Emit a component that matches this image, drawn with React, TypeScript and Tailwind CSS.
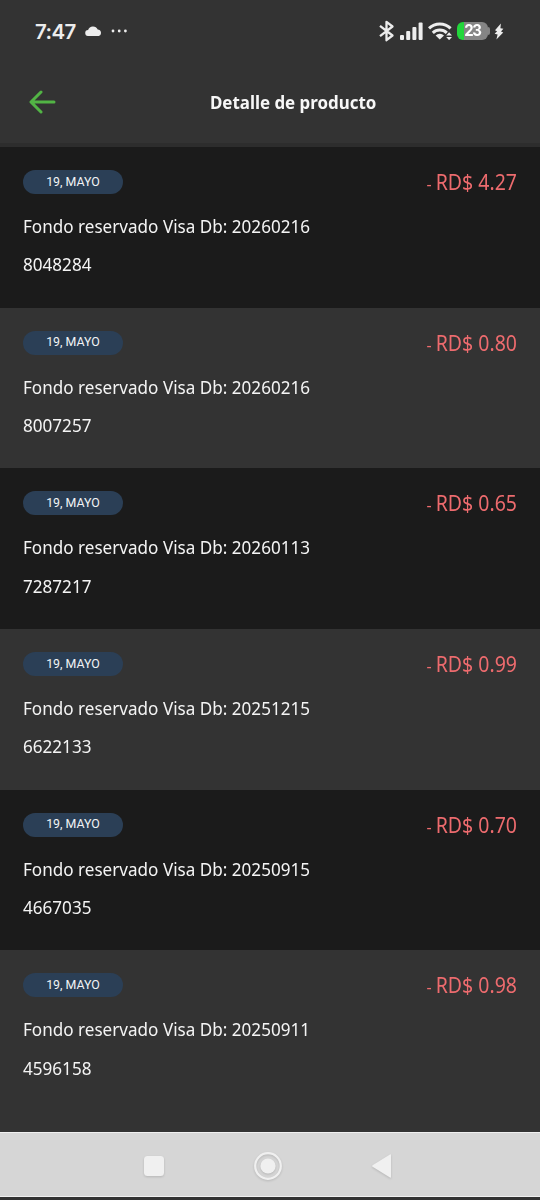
import { clsx } from "clsx";

type Movement = {
  date: string;
  description: string;
  reference: string;
  amount: string;
};

const movements: Movement[] = [
  { date: "19, MAYO", description: "Fondo reservado Visa Db: 20260216", reference: "8048284", amount: "RD$ 4.27" },
  { date: "19, MAYO", description: "Fondo reservado Visa Db: 20260216", reference: "8007257", amount: "RD$ 0.80" },
  { date: "19, MAYO", description: "Fondo reservado Visa Db: 20260113", reference: "7287217", amount: "RD$ 0.65" },
  { date: "19, MAYO", description: "Fondo reservado Visa Db: 20251215", reference: "6622133", amount: "RD$ 0.99" },
  { date: "19, MAYO", description: "Fondo reservado Visa Db: 20250915", reference: "4667035", amount: "RD$ 0.70" },
  { date: "19, MAYO", description: "Fondo reservado Visa Db: 20250911", reference: "4596158", amount: "RD$ 0.98" },
];

function StatusBar() {
  return (
    <div className="flex h-[62px] items-center pl-[35px] pr-[37px] text-[#ededed]">
      <span className="mt-[2px] w-[42px] whitespace-nowrap font-['Inter',sans-serif] text-[20.5px] font-semibold tracking-[-0.6px]">
        7:47
      </span>
      <svg className="ml-2 h-[10px] w-[17px]" viewBox="0 0 17 10" fill="currentColor">
        <path d="M3.3 10a3 3 0 0 1-.2-6A5.2 5.2 0 0 1 12.7 3.6 3.3 3.3 0 0 1 13.8 10Z" />
      </svg>
      <svg className="ml-[9px] h-1 w-[18px]" viewBox="0 0 18 4" fill="currentColor">
        <circle cx="2" cy="2" r="1.4" />
        <circle cx="8.2" cy="2" r="1.4" />
        <circle cx="14.4" cy="2" r="1.4" />
      </svg>

      <div className="ml-auto flex items-center">
        <svg className="h-[22px] w-4" viewBox="0 0 16 22" fill="none" stroke="currentColor" strokeWidth="2.3">
          <path d="M1 5.8 13.5 15.5 7.5 20.2V1.8l6 4.7L1 16.2" strokeLinejoin="round" />
        </svg>
        <svg className="ml-[5px] h-[18px] w-[23px]" viewBox="0 0 23 18" fill="currentColor">
          <rect x="0" y="13" width="4" height="5" rx="1" />
          <rect x="6.2" y="9" width="4" height="9" rx="1" />
          <rect x="12.4" y="5" width="4" height="13" rx="1" />
          <rect x="18.6" y="0.5" width="4" height="17.5" rx="1" />
        </svg>
        <svg className="ml-[5px] h-[18px] w-[25px]" viewBox="0 0 25 18">
          <g fill="none" stroke="currentColor" strokeWidth="3">
            <path d="M1 6.3a15.6 15.6 0 0 1 21.6 0" />
            <path d="M4.8 10.8a10.2 10.2 0 0 1 14 0" />
          </g>
          <path d="M7.6 13.4a6 6 0 0 1 8.4 0L11.8 17.5Z" fill="currentColor" />
          <path d="m18.2 13.6 2.9-3.4 2.9 3.4ZM18.2 15l2.9 3.2 2.9-3.2Z" fill="currentColor" />
        </svg>
        <div className="ml-[4px] flex items-center">
          <div className="flex h-[18px] w-[31px] items-center justify-center rounded-[6px] bg-[linear-gradient(90deg,#22d63b_0_7px,#858585_7px)] text-white">
            <span className="scale-y-[1.08] font-['Inter',sans-serif] text-[15px] font-bold tracking-[-1.2px]">23</span>
          </div>
          <div className="h-2 w-[2px] rounded-r-full bg-[#858585]" />
        </div>
        <svg className="ml-[4px] -mr-px h-[17px] w-[10px]" viewBox="0 0 10 17" fill="currentColor">
          <path d="M6.9.5 1 7.3l2.1 1L.6 10.8l3 .6L2.4 16.5 9.2 9.4 7 8.6l2.4-2.8-3-.5Z" />
        </svg>
      </div>
    </div>
  );
}

function Header() {
  return (
    <header className="flex h-[85px] items-center border-b-4 border-[#2d2d2d] pb-[2px]">
      <button className="ml-[29px]" aria-label="Volver">
        <svg className="h-6 w-7" viewBox="0 0 28 24" fill="none" stroke="#52b445" strokeWidth="3" strokeLinecap="round" strokeLinejoin="round">
          <path d="M12 2 2 12l10 10M2.5 12H25" />
        </svg>
      </button>
      <h1 className="ml-[153px] scale-y-[1.08] whitespace-nowrap text-[16.9px] font-bold text-[#f7f7f7]">
        Detalle de producto
      </h1>
    </header>
  );
}

function MovementRow({ movement, dark }: { movement: Movement; dark: boolean }) {
  return (
    <li className={clsx("h-[160.67px] px-[23px] pt-[23px]", dark ? "bg-[#1b1b1b]" : "bg-[#333333]")}>
      <div className="flex h-6 items-center justify-between">
        <span className="flex h-6 w-[100px] items-center justify-center rounded-full bg-[#2b3f56] font-['Roboto',sans-serif] text-[12.4px] text-[#f1f3f5]">
          {movement.date}
        </span>
        <span className="mt-[3px] scale-y-[1.07] whitespace-nowrap text-[19.5px] leading-6 text-[#ed6b6e]">
          <span className="text-[16px]">- </span>
          {movement.amount}
        </span>
      </div>
      <p className="mt-[14px] whitespace-nowrap text-[17.1px] leading-[38.4px] text-[#f4f4f4]">
        <span className="block scale-y-[1.05]">{movement.description}</span>
        <span className="block scale-y-[1.05]">{movement.reference}</span>
      </p>
    </li>
  );
}

function NavigationBar() {
  return (
    <nav className="h-[68px] border-b-[3px] border-[#333333]">
      <div className="flex h-[65px] items-center border-y border-[#f0f0f0] bg-[#d6d6d6] pt-[3px] text-[#f0f0f0]">
        <svg className="ml-[143px] h-[22px] w-[22px] drop-shadow-[0_1px_1px_rgba(0,0,0,0.15)]" viewBox="0 0 22 22" fill="currentColor">
          <rect x="1" y="1" width="20" height="20" rx="3.5" />
        </svg>
        <svg className="ml-[88px] h-[30px] w-[30px] drop-shadow-[0_1px_1px_rgba(0,0,0,0.15)]" viewBox="0 0 30 30">
          <circle cx="15" cy="15" r="12.8" fill="none" stroke="currentColor" strokeWidth="2.2" />
          <circle cx="15" cy="15" r="7.6" fill="currentColor" />
        </svg>
        <svg className="ml-[88px] h-6 w-[21px] drop-shadow-[0_1px_1px_rgba(0,0,0,0.15)]" viewBox="0 0 21 24" fill="currentColor">
          <path d="M1.6 11.2 19 .4q1-.5 1 .6v22q0 1-1 .5L1.6 12.8q-1-.8 0-1.6Z" />
        </svg>
      </div>
    </nav>
  );
}

export default function App() {
  return (
    <main className="flex h-[1200px] w-[540px] flex-col overflow-hidden bg-[#333333] font-['Noto_Sans',sans-serif]">
      <StatusBar />
      <Header />
      <ul className="flex-1">
        {movements.map((movement, index) => (
          <MovementRow key={movement.reference} movement={movement} dark={index % 2 === 0} />
        ))}
      </ul>
      <NavigationBar />
    </main>
  );
}
